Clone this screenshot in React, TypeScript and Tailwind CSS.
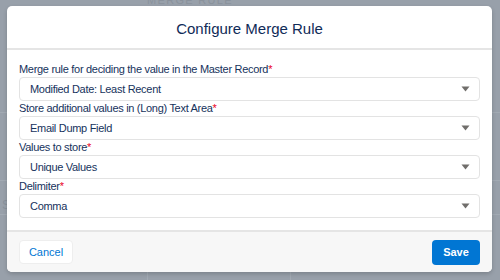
import React from 'react';

const fields = [
  { label: 'Merge rule for deciding the value in the Master Record', value: 'Modified Date: Least Recent' },
  { label: 'Store additional values in (Long) Text Area', value: 'Email Dump Field' },
  { label: 'Values to store', value: 'Unique Values' },
  { label: 'Delimiter', value: 'Comma' },
];

const Caret = () => (
  <svg width="9" height="6" viewBox="0 0 9 6" className="shrink-0">
    <path d="M0.5 0.5h8L4.5 5.5z" fill="#706e6b" />
  </svg>
);

export default function App() {
  return (
    <div
      className="relative w-[500px] h-[280px] overflow-hidden bg-[#98a0aa]"
      style={{ fontFamily: '"Liberation Sans", Arial, sans-serif' }}
    >
      {/* page behind the backdrop */}
      <div className="absolute left-[147px] top-[-8px] text-[11px] tracking-[0.12em] text-[#8a929c]">MERGE RULE</div>
      <div className="absolute left-0 top-[112px] w-full h-px bg-[#a2aab3]" />
      <div className="absolute left-0 top-[180px] w-full h-px bg-[#a2aab3]" />
      <div className="absolute left-0 top-[214px] w-full h-px bg-[#a2aab3]" />
      <div className="absolute left-[147px] top-[260px] w-px h-[20px] bg-[#a2aab3]" />
      <div className="absolute left-[290px] top-[260px] w-px h-[20px] bg-[#a2aab3]" />
      <div className="absolute left-[2px] top-[196px] text-[12px] text-[#8a929c]">S</div>

      {/* modal */}
      <div className="absolute left-[7px] top-[6px] w-[485px] h-[266px] bg-white rounded-[5px] shadow-[0_2px_4px_rgba(0,0,0,0.18)] flex flex-col overflow-hidden">
        <div className="h-[44px] shrink-0 flex items-center justify-center border-b-2 border-[#e5e5e5]">
          <h2 className="text-[15px] text-[#0f2b57] leading-none pt-[2px]">Configure Merge Rule</h2>
        </div>

        <div className="flex-1 px-[12px] pt-[12px]">
          {fields.map((f) => (
            <div key={f.label} className="flex flex-col">
              <label className="h-[15px] text-[11px] leading-[15px] tracking-[-0.3px] text-[#16325c]">
                {f.label}
                <span className="text-[#ea001e]">*</span>
              </label>
              <div className="h-[24px] flex items-center justify-between pl-[10px] pr-[9px] border border-[#e3e3e3] rounded-[4px] bg-white">
                <span className="text-[11px] tracking-[-0.3px] text-[#16325c]">{f.value}</span>
                <Caret />
              </div>
            </div>
          ))}
        </div>

        <div className="h-[42px] shrink-0 flex items-center justify-between px-[12px] bg-[#f7f7f7] border-t-2 border-[#e5e5e5]">
          <button className="h-[24px] w-[54px] rounded-[4px] bg-white border border-[#eeeeee] text-[11px] text-[#0176d3]">
            Cancel
          </button>
          <button className="h-[25px] w-[48px] rounded-[4px] bg-[#0176d3] text-[11px] font-bold text-white">
            Save
          </button>
        </div>
      </div>
    </div>
  );
}
